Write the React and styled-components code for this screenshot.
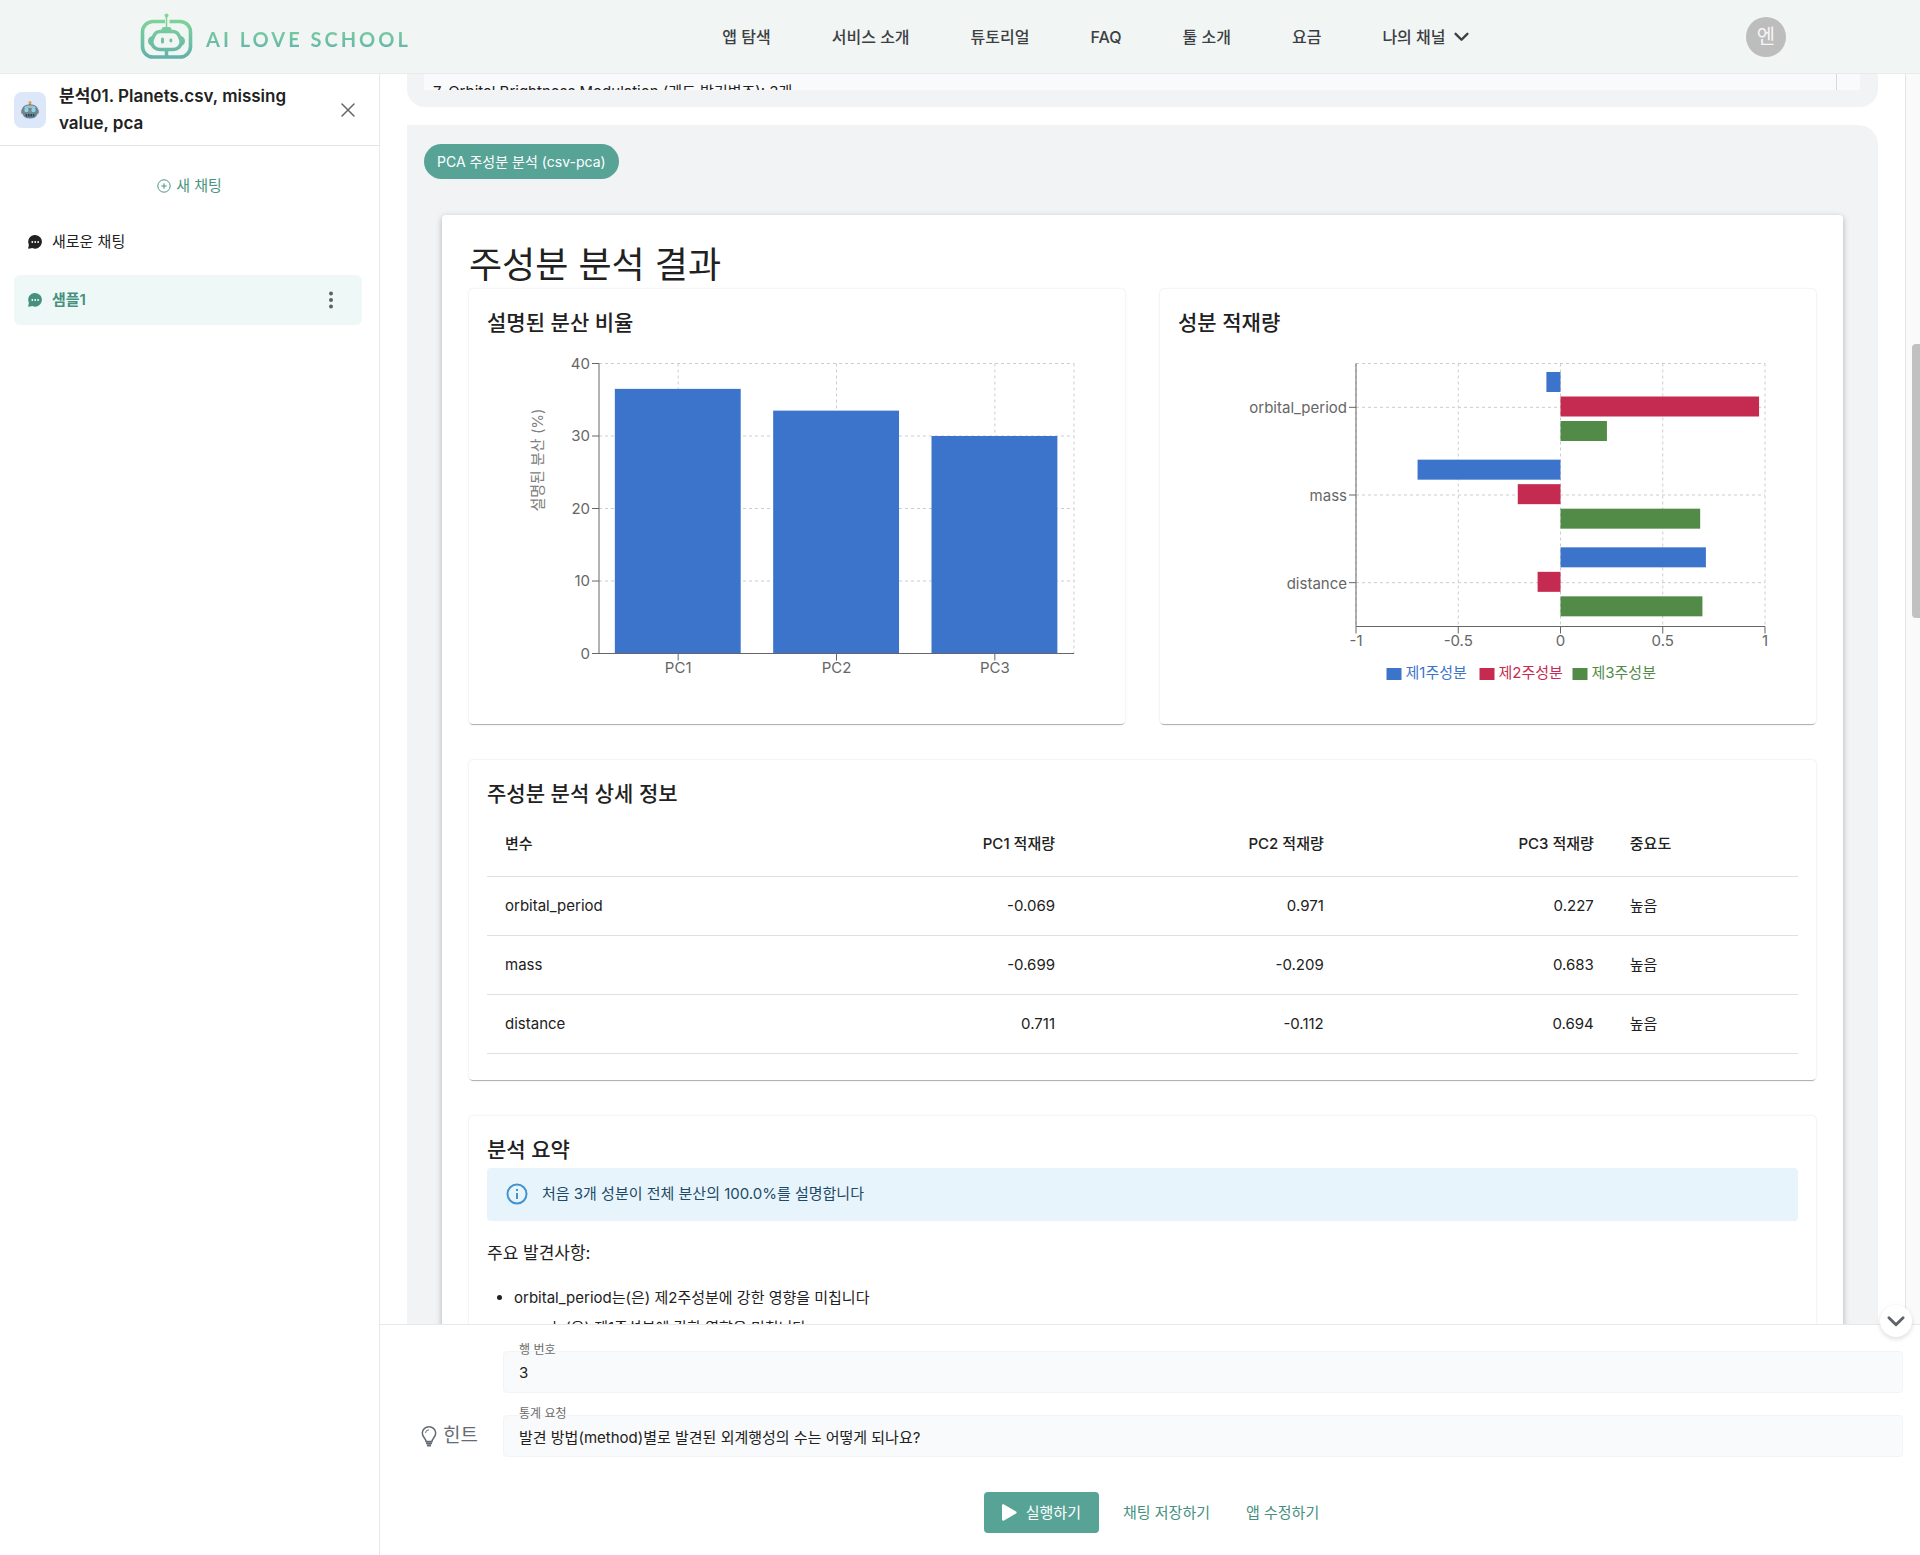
import React from "react";
import styled, { createGlobalStyle } from "styled-components";

const GlobalStyle = createGlobalStyle`
  *, *::before, *::after { box-sizing: border-box; }
  body {
    margin: 0;
    background: #fff;
    color: #212121;
    font-family: Inter, "Noto Sans CJK KR", sans-serif;
    font-size: 15px;
    line-height: 20px;
  }
  button, input { font: inherit; color: inherit; }
  button { border: 0; padding: 0; background: none; cursor: pointer; }
  a { color: inherit; text-decoration: none; }
  h1, h2, h3, p, ul { margin: 0; }
`;

/* ---------- shell ---------- */

const Shell = styled.div`
  display: flex;
  flex-direction: column;
  height: 100vh;
`;

const Header = styled.header`
  display: flex;
  align-items: center;
  flex: none;
  height: 74px;
  padding: 0 134px 0 140px;
  background: #f1f5f4;
  border-bottom: 1px solid #e8ebea;
`;

const Brand = styled.a`
  display: flex;
  align-items: center;
  gap: 13px;
`;

const BrandName = styled.span`
  padding-top: 4px;
  font-family: Lato, sans-serif;
  font-size: 20px;
  font-weight: 700;
  line-height: 24px;
  letter-spacing: 3px;
  background: linear-gradient(#7fd39f, #62b3ab);
  background-clip: text;
  color: transparent;
`;

const Nav = styled.nav`
  display: flex;
  flex: 1;
  justify-content: center;
  gap: 61px;
  padding-left: 34px;
  font-size: 16px;
  font-weight: 500;
  color: #3c4043;
`;

const NavLink = styled.a`
  display: flex;
  align-items: center;
  gap: 8px;
`;

const Avatar = styled.button`
  width: 40px;
  height: 40px;
  border-radius: 50%;
  background: #bdbdbd;
  color: #f5f5f5;
  font-size: 20px;
`;

const Body = styled.div`
  display: flex;
  flex: 1;
  min-height: 0;
`;

const IconButton = styled.button`
  display: flex;
  align-items: center;
`;

/* ---------- sidebar ---------- */

const Sidebar = styled.aside`
  flex: none;
  width: 380px;
  border-right: 1px solid #e8e8e8;
`;

const SidebarHead = styled.div`
  display: flex;
  align-items: center;
  gap: 13px;
  height: 72px;
  padding: 1px 24px 0 14px;
  border-bottom: 1px solid #e4e4e4;
`;

const AppBadge = styled.span`
  display: grid;
  place-items: center;
  flex: none;
  width: 32px;
  height: 36px;
  border-radius: 8px;
  background: #dce8fa;
`;

const SidebarTitle = styled.h1`
  flex: 1;
  font-size: 17px;
  line-height: 27px;
  font-weight: 600;
`;

const NewChat = styled.button`
  display: flex;
  align-items: center;
  justify-content: center;
  gap: 5px;
  width: 100%;
  height: 80px;
  color: #4b9583;
`;

const ChatList = styled.ul`
  display: flex;
  flex-direction: column;
  gap: 8px;
  padding: 0 17px 0 14px;
  margin-top: -9px;
  list-style: none;
`;

const ChatItem = styled.li`
  display: flex;
  align-items: center;
  height: 50px;
  padding: 0 29px 0 14px;
  border-radius: 6px;
  background: ${(p) => (p.$active ? "#eef8f7" : "transparent")};
  color: ${(p) => (p.$active ? "#45907f" : "#212121")};
  font-weight: ${(p) => (p.$active ? 600 : 400)};
`;

const ChatLink = styled.a`
  display: flex;
  align-items: center;
  flex: 1;
  gap: 10px;
`;

/* ---------- conversation ---------- */

const Main = styled.main`
  display: flex;
  flex-direction: column;
  flex: 1;
  min-width: 0;
`;

const Viewport = styled.div`
  position: relative;
  display: flex;
  flex: 1;
  min-height: 0;
`;

const Messages = styled.div`
  flex: 1;
  min-width: 0;
  padding: 0 27px;
  overflow: hidden;
`;

const ScrollTrack = styled.div`
  flex: none;
  width: 15px;
  padding-top: 270px;
  border-left: 1px solid #e4e4e4;
  background: #fafafa;
`;

const ScrollThumb = styled.div`
  width: 8px;
  height: 274px;
  margin-left: auto;
  border-radius: 4px 0 0 4px;
  background: #c1c1c1;
`;

const ToBottom = styled.button`
  position: absolute;
  right: 8px;
  bottom: -13px;
  display: grid;
  place-items: center;
  width: 32px;
  height: 32px;
  border-radius: 50%;
  background: #fff;
  box-shadow: 0 2px 5px rgba(0, 0, 0, 0.14);
`;

const PreviousMessage = styled.section`
  height: 33px;
  padding: 0 18px 17px 17px;
  border-radius: 0 0 18px 18px;
  background: #f1f3f5;
`;

const Transcript = styled.div`
  display: flex;
  justify-content: space-between;
  height: 16px;
  padding: 8px 23px 0 9px;
  overflow: hidden;
  background: #f9fafb;
`;

const TranscriptEdge = styled.span`
  align-self: flex-start;
  width: 1px;
  height: 16px;
  margin-top: -8px;
  background: #d8dadc;
`;

const Message = styled.section`
  margin-top: 18px;
  padding: 19px 17px;
  border-radius: 0 20px 0 0;
  background: #f1f3f5;
`;

const ToolChip = styled.span`
  display: inline-flex;
  align-items: center;
  height: 35px;
  padding: 0 13px;
  border-radius: 18px;
  background: #57a497;
  color: #fff;
  font-size: 14px;
`;

const Paper = styled.article`
  display: flex;
  flex-direction: column;
  gap: 36px;
  margin: 36px 18px 0;
  padding: 26px 27px 60px;
  border-radius: 4px;
  background: #fff;
  box-shadow: 0 2px 6px rgba(0, 0, 0, 0.28);
`;

const PaperTitle = styled.h2`
  margin-bottom: -36px;
  font-size: 36px;
  line-height: 48px;
  font-weight: 400;
`;

const ChartRow = styled.div`
  display: grid;
  grid-template-columns: 1fr 1fr;
  gap: 35px;
`;

const Card = styled.section`
  padding: 19px 18px;
  border-radius: 4px;
  background: #fff;
  box-shadow: 0 2px 1px -1px rgba(0, 0, 0, 0.3), 0 0 2px rgba(0, 0, 0, 0.16);
`;

const CardTitle = styled.h3`
  font-size: 21px;
  line-height: 30px;
  font-weight: 500;
`;

const ChartSvg = styled.svg`
  display: block;
  width: 100%;
  height: 367px;
  font-size: 15px;
  fill: #666;
`;

const Table = styled.table`
  width: 100%;
  margin-bottom: 7px;
  border-collapse: collapse;
  table-layout: fixed;
`;

const Col = styled.col`
  width: ${(p) => p.$w}%;
`;

const Cell = styled.td`
  height: 59px;
  padding: 0 18px;
  border-bottom: 1px solid #e0e0e0;
  text-align: ${(p) => (p.$num ? "right" : "left")};
`;

const HeadCell = styled(Cell)`
  height: 67px;
  padding-top: 4px;
  font-weight: 500;
`;

const Alert = styled.div`
  display: flex;
  align-items: center;
  gap: 14px;
  height: 53px;
  margin-top: 3px;
  padding: 0 19px;
  border-radius: 4px;
  background: #e7f4fc;
  color: #1e4a66;
`;

const Findings = styled.p`
  margin-top: 20px;
  font-size: 17px;
  line-height: 24px;
`;

const FindingList = styled.ul`
  margin-top: 18px;
  padding-left: 27px;
  line-height: 30px;
`;

/* ---------- composer ---------- */

const Composer = styled.form`
  display: flex;
  flex-direction: column;
  flex: none;
  padding: 26px 17px 22px 41px;
  border-top: 1px solid #e8e8e8;
`;

const ComposerGrid = styled.div`
  display: grid;
  grid-template-columns: 66px 1fr;
  column-gap: 16px;
  row-gap: 22px;
  align-items: center;
`;

const Hint = styled.button`
  display: flex;
  align-items: center;
  gap: 6px;
  grid-column: 1;
  color: #666b73;
  font-size: 19px;
`;

const Field = styled.div`
  position: relative;
  grid-column: 2;
`;

const FieldLabel = styled.label`
  position: absolute;
  top: -9px;
  left: 16px;
  font-size: 12px;
  line-height: 16px;
  color: #6b6b6b;
`;

const FieldInput = styled.input`
  display: block;
  width: 100%;
  height: 42px;
  padding: 0 15px;
  border: 1px solid #f3f4f6;
  border-radius: 4px;
  background: #f9fafb;
  outline: none;
`;

const Actions = styled.div`
  display: flex;
  justify-content: center;
  gap: 12px;
  margin-top: 35px;
  padding-right: 9px;
`;

const ActionButton = styled.button`
  display: flex;
  align-items: center;
  gap: 9px;
  height: 41px;
  padding: 0 ${(p) => (p.$primary ? 18 : 12)}px;
  border-radius: 4px;
  background: ${(p) => (p.$primary ? "#57a497" : "transparent")};
  color: ${(p) => (p.$primary ? "#fff" : "#45907f")};
`;

/* ---------- icons ---------- */

const Logo = () => (
  <svg width="53" height="52" viewBox="0 0 53 52" fill="none" aria-hidden="true">
    <defs>
      <linearGradient id="brand" x1="0" y1="4" x2="0" y2="48" gradientUnits="userSpaceOnUse">
        <stop stopColor="#82d896" />
        <stop offset="1" stopColor="#62b0ac" />
      </linearGradient>
    </defs>
    <g stroke="url(#brand)">
      <path d="M25 10.500H13A10.500 10.500 0 0 0 2.500 21v14.500A10.500 10.500 0 0 0 13 46h27a10.500 10.500 0 0 0 10.500-10.500V21A10.500 10.500 0 0 0 40 10.500H29.500" strokeWidth="3.600" />
      <rect x="25.750" y="5" width="1.500" height="13" fill="url(#brand)" stroke="none" />
      <rect x="24.750" y="38" width="3.500" height="7" fill="url(#brand)" stroke="none" />
      <path d="M20 20.500h13c3.500 0 5 1.500 6.500 5 1.500 3 2 5 1.500 7-1 4-4 6-8.500 6h-12c-4.500 0-7.500-2-8.500-6-.5-2 0-4 1.500-7 1.500-3.500 3-5 6.500-5Z" strokeWidth="3.500" />
    </g>
    <g fill="url(#brand)">
      <circle cx="26.500" cy="4.500" r="2" />
      <path d="M21.500 20v-1.500c0-1.500 1-2.500 2.500-2.500h5c1.500 0 2.500 1 2.500 2.500V20Z" />
      <path d="M12 25c-2.500.5-4 2.500-4 5s1.500 4.500 4 5ZM41 25c2.500.5 4 2.500 4 5s-1.500 4.500-4 5Z" />
      <rect x="21" y="26.500" width="3" height="6" rx="1.500" />
      <rect x="29.500" y="27.500" width="2.800" height="4" rx="1.400" />
    </g>
  </svg>
);

const RobotFace = () => (
  <svg width="20" height="20" viewBox="0 0 20 20" aria-hidden="true">
    <rect x="9" y="2" width="2" height="4" fill="#8c7d70" />
    <circle cx="10" cy="2.500" r="1.500" fill="#e5a04a" />
    <rect x="1" y="9" width="3" height="5" rx="1.500" fill="#b98f76" />
    <rect x="16" y="9" width="3" height="5" rx="1.500" fill="#b98f76" />
    <path d="M2 10c0-3.500 3-5.500 8-5.500s8 2 8 5.500c0 5-2 8.500-8 8.500S2 15 2 10Z" fill="#668796" />
    <path d="M4 8c.5-2 2.500-2.500 6-2.500S15.500 6 16 8Z" fill="#a8bcc4" />
    <circle cx="6.500" cy="10" r="2.200" fill="#8fd3e8" />
    <circle cx="13.500" cy="10" r="2.200" fill="#8fd3e8" />
    <path d="m10 10.500 1 1.800H9Z" fill="#e2785e" />
    <rect x="5.500" y="14" width="9" height="2.500" rx="1" fill="#34434b" />
    <path d="M7.500 14v2.500M10 14v2.500M12.500 14v2.500" stroke="#86a3ae" strokeWidth=".6" />
  </svg>
);

const ChatIcon = () => (
  <svg width="14" height="14" viewBox="0 0 14 14" aria-hidden="true">
    <path d="M7.200 0A6.800 6.800 0 1 1 4.300 13L.8 13.800c-.4.100-.7-.2-.6-.6L.9 9.800A6.800 6.800 0 0 1 7.200 0Z" fill="currentColor" />
    <g fill="#fff">
      <circle cx="4.300" cy="7" r=".9" />
      <circle cx="7.200" cy="7" r=".9" />
      <circle cx="10.100" cy="7" r=".9" />
    </g>
  </svg>
);

const CirclePlus = () => (
  <svg width="14" height="14" viewBox="0 0 14 14" fill="none" stroke="currentColor" aria-hidden="true">
    <circle cx="7" cy="7" r="6.200" />
    <path d="M7 4.300v5.400M4.300 7h5.400" />
  </svg>
);

const CloseIcon = () => (
  <svg width="14" height="14" viewBox="0 0 14 14" stroke="#666" strokeWidth="1.500" strokeLinecap="round" aria-hidden="true">
    <path d="m1 1 12 12M13 1 1 13" />
  </svg>
);

const DotsIcon = () => (
  <svg width="4" height="18" viewBox="0 0 4 18" fill="#616161" aria-hidden="true">
    <circle cx="2" cy="2.500" r="2" />
    <circle cx="2" cy="9" r="2" />
    <circle cx="2" cy="15.500" r="2" />
  </svg>
);

const ChevronDown = ({ size, color }) => (
  <svg width={size} height={size} viewBox="0 0 14 14" fill="none" stroke={color} strokeWidth="2.200" strokeLinecap="round" strokeLinejoin="round" aria-hidden="true">
    <path d="m1.500 4.500 5.500 5.500 5.500-5.500" />
  </svg>
);

const InfoIcon = () => (
  <svg width="22" height="22" viewBox="0 0 22 22" fill="none" stroke="#4392d0" strokeWidth="2" aria-hidden="true">
    <circle cx="11" cy="11" r="9.500" />
    <path d="M11 10v6M11 6v2" />
  </svg>
);

const BulbIcon = () => (
  <svg width="16" height="21" viewBox="0 0 16 21" fill="none" stroke="currentColor" strokeWidth="1.500" aria-hidden="true">
    <path d="M5 15.500c0-3-3.700-4.300-3.700-8.500a6.700 6.200 0 0 1 13.400 0c0 4.200-3.700 5.500-3.700 8.500Z" />
    <path d="M4.500 7A3.500 3.500 0 0 1 8 3.800" strokeWidth="1" />
    <path d="M5 17.200h6M6 19.500h4" strokeWidth="2" />
  </svg>
);

const PlayIcon = () => (
  <svg width="15" height="17" viewBox="0 0 15 17" fill="currentColor" aria-hidden="true">
    <path d="M0 1.500C0 .5 1 0 2 .5l12 7c.9.5.9 1.500 0 2l-12 7c-1 .5-2 0-2-1Z" />
  </svg>
);

/* ---------- charts ---------- */

const BLUE = "#3d74cb";
const RED = "#c52b50";
const GREEN = "#518b47";

function VarianceChart() {
  const x0 = 111.5, x1 = 586.5, y0 = 25.5, y1 = 315.5;
  const band = (x1 - x0) / 3;
  const y = (v) => y1 - (v / 40) * (y1 - y0);
  const data = [["PC1", 36.5], ["PC2", 33.5], ["PC3", 30]];
  return (
    <ChartSvg viewBox="0 0 619 367" role="img" aria-label="설명된 분산 비율">
      <g stroke="#ccc" strokeDasharray="3 3">
        {[0, 10, 20, 30, 40].map((v) => <line key={v} x1={x0} x2={x1} y1={y(v)} y2={y(v)} />)}
        {data.map(([n], i) => <line key={n} x1={x0 + band * (i + 0.5)} x2={x0 + band * (i + 0.5)} y1={y0} y2={y1} />)}
        <line x1={x1} x2={x1} y1={y0} y2={y1} />
      </g>
      {data.map(([n, v], i) => (
        <rect key={n} x={x0 + band * (i + 0.1)} y={y(v)} width={band * 0.795} height={y1 - y(v)} fill={BLUE} />
      ))}
      <g stroke="#666">
        <path d={`M${x0} ${y0}V${y1}H${x1}`} fill="none" />
        {[0, 10, 20, 30, 40].map((v) => <line key={v} x1={x0 - 7} x2={x0} y1={y(v)} y2={y(v)} />)}
        {data.map(([n], i) => <line key={n} x1={x0 + band * (i + 0.5)} x2={x0 + band * (i + 0.5)} y1={y1} y2={y1 + 7} />)}
      </g>
      {[0, 10, 20, 30, 40].map((v) => <text key={v} x={x0 - 9} y={y(v) + 5} textAnchor="end">{v}</text>)}
      {data.map(([n], i) => <text key={n} x={x0 + band * (i + 0.5)} y={y1 + 19} textAnchor="middle">{n}</text>)}
      <text transform="translate(55 122) rotate(-90)" textAnchor="middle" fill="#808080">설명된 분산 (%)</text>
    </ChartSvg>
  );
}

function LoadingChart() {
  const x0 = 177.5, x1 = 586.5, y0 = 25.5, y1 = 288.5;
  const band = (y1 - y0) / 3;
  const x = (v) => x0 + ((v + 1) / 2) * (x1 - x0);
  const rows = [
    ["orbital_period", [-0.069, 0.971, 0.227]],
    ["mass", [-0.699, -0.209, 0.683]],
    ["distance", [0.711, -0.112, 0.694]],
  ];
  const colors = [BLUE, RED, GREEN];
  const ticks = [-1, -0.5, 0, 0.5, 1];
  return (
    <ChartSvg viewBox="0 0 619 367" role="img" aria-label="성분 적재량">
      <g stroke="#ccc" strokeDasharray="3 3">
        {ticks.map((v) => <line key={v} x1={x(v)} x2={x(v)} y1={y0} y2={y1} />)}
        {rows.map(([n], i) => <line key={n} x1={x0} x2={x1} y1={y0 + band * (i + 0.5)} y2={y0 + band * (i + 0.5)} />)}
        <line x1={x0} x2={x1} y1={y0} y2={y0} />
      </g>
      {rows.map(([n, values], i) =>
        values.map((v, j) => (
          <rect key={n + j} x={Math.min(x(0), x(v))} y={y0 + band * i + 8.5 + j * 24.5} width={Math.abs(x(v) - x(0))} height="20" fill={colors[j]} />
        ))
      )}
      <g stroke="#666">
        <path d={`M${x0} ${y0}V${y1}H${x1}`} fill="none" />
        {ticks.map((v) => <line key={v} x1={x(v)} x2={x(v)} y1={y1} y2={y1 + 7} />)}
        {rows.map(([n], i) => <line key={n} x1={x0 - 7} x2={x0} y1={y0 + band * (i + 0.5)} y2={y0 + band * (i + 0.5)} />)}
      </g>
      {ticks.map((v) => <text key={v} x={x(v)} y={y1 + 19} textAnchor="middle">{v}</text>)}
      {rows.map(([n], i) => <text key={n} x={x0 - 9} y={y0 + band * (i + 0.5) + 6} textAnchor="end">{n}</text>)}
      {["제1주성분", "제2주성분", "제3주성분"].map((n, i) => (
        <g key={n} fill={colors[i]}>
          <rect x={208 + i * 93} y="330" width="15" height="12" />
          <text x={227 + i * 93} y="340">{n}</text>
        </g>
      ))}
    </ChartSvg>
  );
}

/* ---------- page ---------- */

const NAV = ["앱 탐색", "서비스 소개", "튜토리얼", "FAQ", "툴 소개", "요금"];
const ROWS = [
  ["orbital_period", "-0.069", "0.971", "0.227", "높음"],
  ["mass", "-0.699", "-0.209", "0.683", "높음"],
  ["distance", "0.711", "-0.112", "0.694", "높음"],
];

export default function App() {
  return (
    <Shell>
      <GlobalStyle />
      <Header>
        <Brand href="#"><Logo /><BrandName>AI LOVE SCHOOL</BrandName></Brand>
        <Nav>
          {NAV.map((n) => <NavLink key={n} href="#">{n}</NavLink>)}
          <NavLink href="#">나의 채널 <ChevronDown size={15} color="#3c4043" /></NavLink>
        </Nav>
        <Avatar type="button">엔</Avatar>
      </Header>
      <Body>
        <Sidebar>
          <SidebarHead>
            <AppBadge><RobotFace /></AppBadge>
            <SidebarTitle>분석01. Planets.csv, missing value, pca</SidebarTitle>
            <IconButton type="button" aria-label="닫기"><CloseIcon /></IconButton>
          </SidebarHead>
          <NewChat type="button"><CirclePlus />새 채팅</NewChat>
          <ChatList>
            <ChatItem><ChatLink href="#"><ChatIcon />새로운 채팅</ChatLink></ChatItem>
            <ChatItem $active>
              <ChatLink href="#"><ChatIcon />샘플1</ChatLink>
              <IconButton type="button" aria-label="더보기"><DotsIcon /></IconButton>
            </ChatItem>
          </ChatList>
        </Sidebar>
        <Main>
          <Viewport>
            <Messages>
              <PreviousMessage>
                <Transcript>
                  <span>7. Orbital Brightness Modulation (궤도 밝기변조): 3개</span>
                  <TranscriptEdge />
                </Transcript>
              </PreviousMessage>
              <Message>
                <ToolChip>PCA 주성분 분석 (csv-pca)</ToolChip>
                <Paper>
                  <PaperTitle>주성분 분석 결과</PaperTitle>
                  <ChartRow>
                    <Card><CardTitle>설명된 분산 비율</CardTitle><VarianceChart /></Card>
                    <Card><CardTitle>성분 적재량</CardTitle><LoadingChart /></Card>
                  </ChartRow>
                  <Card>
                    <CardTitle>주성분 분석 상세 정보</CardTitle>
                    <Table>
                      <colgroup><Col $w={24} /><Col $w={20.7} /><Col $w={20.5} /><Col $w={20.6} /><Col $w={14.2} /></colgroup>
                      <thead>
                        <tr>
                          {["변수", "PC1 적재량", "PC2 적재량", "PC3 적재량", "중요도"].map((h, i) => (
                            <HeadCell as="th" scope="col" key={h} $num={i > 0 && i < 4}>{h}</HeadCell>
                          ))}
                        </tr>
                      </thead>
                      <tbody>
                        {ROWS.map((r) => (
                          <tr key={r[0]}>
                            {r.map((c, i) => (
                              <Cell key={i} $num={i > 0 && i < 4}>{c}</Cell>
                            ))}
                          </tr>
                        ))}
                      </tbody>
                    </Table>
                  </Card>
                  <Card>
                    <CardTitle>분석 요약</CardTitle>
                    <Alert role="status"><InfoIcon />처음 3개 성분이 전체 분산의 100.0%를 설명합니다</Alert>
                    <Findings>주요 발견사항:</Findings>
                    <FindingList>
                      <li>orbital_period는(은) 제2주성분에 강한 영향을 미칩니다</li>
                      <li>mass는(은) 제1주성분에 강한 영향을 미칩니다</li>
                    </FindingList>
                  </Card>
                </Paper>
              </Message>
            </Messages>
            <ScrollTrack aria-hidden="true"><ScrollThumb /></ScrollTrack>
            <ToBottom type="button" aria-label="맨 아래로"><ChevronDown size={18} color="#5f6368" /></ToBottom>
          </Viewport>
          <Composer onSubmit={(e) => e.preventDefault()}>
            <ComposerGrid>
              <Field>
                <FieldLabel htmlFor="row">행 번호</FieldLabel>
                <FieldInput id="row" defaultValue="3" />
              </Field>
              <Hint type="button"><BulbIcon />힌트</Hint>
              <Field>
                <FieldLabel htmlFor="request">통계 요청</FieldLabel>
                <FieldInput id="request" defaultValue="발견 방법(method)별로 발견된 외계행성의 수는 어떻게 되나요?" />
              </Field>
            </ComposerGrid>
            <Actions>
              <ActionButton type="submit" $primary><PlayIcon />실행하기</ActionButton>
              <ActionButton type="button">채팅 저장하기</ActionButton>
              <ActionButton type="button">앱 수정하기</ActionButton>
            </Actions>
          </Composer>
        </Main>
      </Body>
    </Shell>
  );
}
